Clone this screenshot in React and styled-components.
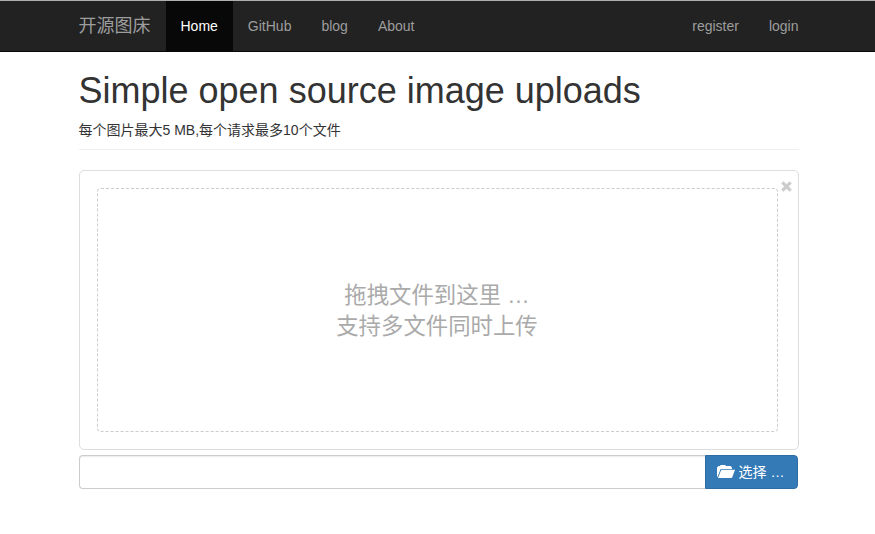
import React from 'react';
import styled, { createGlobalStyle } from 'styled-components';

const GlobalStyle = createGlobalStyle`
  *, *::before, *::after { box-sizing: border-box; }
  body {
    margin: 0;
    background: #fff;
    color: #333;
    font: 14px/20px "Liberation Sans", Arial, "Noto Sans CJK SC", sans-serif;
  }
`;

const Navbar = styled.nav`
  height: 52px;
  background: #222;
  border-top: 1px solid #b0b0b0;
  border-bottom: 1px solid #080808;
`;

const Container = styled.div`
  width: 720px;
  margin-left: 78.5px;
`;

const NavContent = styled(Container)`
  display: flex;
  height: 50px;
`;

const Brand = styled.a`
  width: 87px;
  padding-top: 15px;
  color: #9d9d9d;
  font-size: 18px;
  font-family: "Liberation Sans", "Noto Sans CJK SC", sans-serif;
  white-space: nowrap;
`;

const NavGroup = styled.div`
  display: flex;
  margin-left: ${({ $end }) => ($end ? 'auto' : '0')};
  margin-right: ${({ $end }) => ($end ? '-15px' : '0')};
`;

const NavLink = styled.a`
  padding: 15px;
  color: ${({ $active }) => ($active ? '#fff' : '#9d9d9d')};
  background: ${({ $active }) => ($active ? '#080808' : 'transparent')};
`;

const Title = styled.h1`
  margin: 19px 0 9px;
  font-size: 36px;
  font-weight: 500;
  line-height: 40px;
`;

const Limits = styled.p`
  margin: 0;
`;

const Divider = styled.hr`
  height: 1px;
  margin: 9px 0 20px;
  border: 0;
  background: #eee;
`;

const Preview = styled.section`
  position: relative;
  height: 280px;
  margin-bottom: 5px;
  padding: 17px 20px 17px 17px;
  border: 1px solid #ddd;
  border-radius: 5px;
`;

const DropZone = styled.div`
  display: flex;
  align-items: center;
  justify-content: center;
  height: 244px;
  padding-top: 2px;
  border: 1px dashed #ccc;
  border-radius: 4px;
  color: #aaa;
  font-size: 22.4px;
  line-height: 31px;
  text-align: center;
`;

const CloseButton = styled.button`
  position: absolute;
  top: 10px;
  right: 6px;
  display: flex;
  padding: 0;
  border: 0;
  background: none;
  color: #ccc;
`;

const InputGroup = styled.div`
  display: flex;
  width: 719px;
  height: 34px;
`;

const Caption = styled.input`
  flex: 1;
  min-width: 0;
  padding: 6px 12px;
  border: 1px solid #ccc;
  border-right: 0;
  border-radius: 4px 0 0 4px;
  box-shadow: inset 0 1px 1px rgba(0, 0, 0, 0.075);
  outline: 0;
`;

const BrowseButton = styled.button`
  display: flex;
  align-items: center;
  width: 93px;
  padding: 0 0 0 11px;
  border: 1px solid #2e6da4;
  border-radius: 0 4px 4px 0;
  background: #337ab7;
  color: #fff;
  font: inherit;
  gap: 4px;
  white-space: nowrap;
`;

function CloseIcon() {
  return (
    <svg width="11" height="11" viewBox="0 0 11 11" fill="none" stroke="currentColor" strokeWidth="3.2">
      <path d="M1.3 1.3l8.4 8.4M9.7 1.3L1.3 9.7" />
    </svg>
  );
}

function FolderIcon() {
  return (
    <svg width="18" height="14" viewBox="0 0 18 14" fill="currentColor">
      <path d="M0 11.8V2.5L1.5 1H3L3.6 0H8.2L9 1H13.5L15 2.5V4H3.6L0.6 11.8Z" />
      <path d="M4.3 4.7H18L15.3 12.2Q15 13 14 13H1Z" />
    </svg>
  );
}

export default function App() {
  return (
    <>
      <GlobalStyle />
      <Navbar>
        <NavContent>
          <Brand>开源图床</Brand>
          <NavGroup>
            <NavLink $active>Home</NavLink>
            <NavLink>GitHub</NavLink>
            <NavLink>blog</NavLink>
            <NavLink>About</NavLink>
          </NavGroup>
          <NavGroup $end>
            <NavLink>register</NavLink>
            <NavLink>login</NavLink>
          </NavGroup>
        </NavContent>
      </Navbar>
      <Container as="main">
        <Title>Simple open source image uploads</Title>
        <Limits>每个图片最大5 MB,每个请求最多10个文件</Limits>
        <Divider />
        <Preview>
          <CloseButton aria-label="Close"><CloseIcon /></CloseButton>
          <DropZone>
            <div>拖拽文件到这里 …<br />支持多文件同时上传</div>
          </DropZone>
        </Preview>
        <InputGroup>
          <Caption readOnly aria-label="Selected files" />
          <BrowseButton><FolderIcon /><span>选择 …</span></BrowseButton>
        </InputGroup>
      </Container>
    </>
  );
}
